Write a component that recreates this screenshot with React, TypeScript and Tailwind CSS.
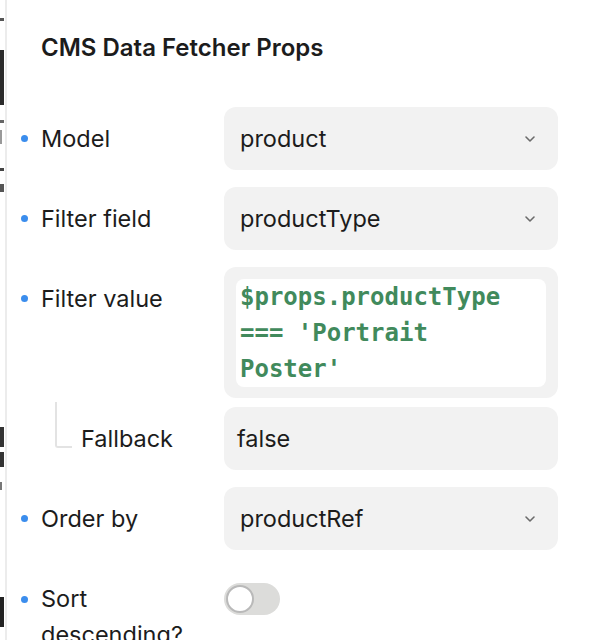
import { ReactNode } from 'react';

const labelFont = { fontFamily: 'Inter, "Noto Sans", sans-serif' };

function Bullet() {
  return <span className="block w-[7px] h-[7px] rounded-full bg-[#3b8ded] shrink-0" />;
}

function Chevron() {
  return (
    <svg width="12" height="8" viewBox="0 0 12 8" className="shrink-0">
      <path d="M2 2 L6 6 L10 2" fill="none" stroke="#6b6b6b" strokeWidth="1.6" strokeLinecap="round" strokeLinejoin="round" />
    </svg>
  );
}

function Row({ label, children, gap = 'mb-[17px]' }: { label: ReactNode; children: ReactNode; gap?: string }) {
  return (
    <div className={`flex items-start ${gap}`}>
      <div className="w-[203px] h-[63px] flex items-center shrink-0">
        <Bullet />
        <span className="ml-[13px] text-[23.5px] text-[#1c1c1c]">{label}</span>
      </div>
      <div className="w-[334px]">{children}</div>
    </div>
  );
}

function Select({ value }: { value: string }) {
  return (
    <div className="h-[63px] rounded-[12px] bg-[#f2f2f2] flex items-center justify-between pl-4 pr-[22px]">
      <span className="text-[23.5px] text-[#1c1c1c]">{value}</span>
      <Chevron />
    </div>
  );
}

function LeftStrip() {
  return (
    <div className="w-[7px] shrink-0 flex border-r-2 border-[#ececec]">
      <div className="w-[4px] flex flex-col">
        <div className="h-[18px]" />
        <div className="h-[3px] bg-[#555]" />
        <div className="h-[29px]" />
        <div className="h-[55px] bg-[#2a2a2a]" />
        <div className="h-[15px]" />
        <div className="h-[3px] bg-[#666]" />
        <div className="h-[7px]" />
        <div className="h-[14px] w-[2px] bg-[#999]" />
        <div className="h-[24px]" />
        <div className="h-[3px] bg-[#444]" />
        <div className="h-[13px]" />
        <div className="h-[8px] bg-[#555]" />
        <div className="h-[235px]" />
        <div className="h-[20px] bg-[#333]" />
        <div className="h-[5px]" />
        <div className="h-[15px] bg-[#333]" />
        <div className="h-[15px]" />
        <div className="h-[8px] w-[2px] bg-[#777]" />
        <div className="h-[107px]" />
        <div className="h-[30px] bg-[#222]" />
      </div>
    </div>
  );
}

export default function App() {
  return (
    <div className="w-[594px] h-[640px] overflow-hidden bg-white flex" style={labelFont}>
      <LeftStrip />
      <div className="flex-1 pl-[14px] pt-[34px]">
        <h1 className="pl-[20px] text-[24px] leading-[28px] font-semibold text-[#1c1c1c]">CMS Data Fetcher Props</h1>

        <div className="mt-[45px]">
          <Row label="Model">
            <Select value="product" />
          </Row>

          <Row label="Filter field">
            <Select value="productType" />
          </Row>

          <Row label="Filter value" gap="mb-[9px]">
            <div className="rounded-[12px] bg-[#f2f2f2] p-3 pb-[11px]">
              <div
                className="rounded-[8px] bg-white pl-1 pr-3 text-[24px] leading-[36px] font-bold text-[#418a5c] break-words"
                style={{ fontFamily: '"DejaVu Sans Mono", "Liberation Mono", monospace' }}
              >
                $props.productType === 'Portrait Poster'
              </div>
            </div>
          </Row>

          <div className="flex items-start mb-[17px]">
            <div className="w-[203px] h-[63px] flex items-center shrink-0">
              <div className="ml-[34px] mb-[22px] self-stretch w-[17px] border-l-2 border-b-2 border-[#e3e3e3] rounded-bl-[3px] mt-[-5px]" />
              <span className="ml-[9px] text-[23.5px] text-[#1c1c1c]">Fallback</span>
            </div>
            <div className="w-[334px] h-[63px] rounded-[12px] bg-[#f2f2f2] flex items-center pl-[13px]">
              <span className="text-[23.5px] text-[#1c1c1c]">false</span>
            </div>
          </div>

          <Row label="Order by">
            <Select value="productRef" />
          </Row>

          <div className="flex items-start">
            <div className="w-[203px] flex items-start shrink-0 pt-[14px]">
              <div className="h-[36px] flex items-center">
                <Bullet />
              </div>
              <span className="ml-[13px] w-[150px] text-[23.5px] leading-[36px] text-[#1c1c1c]">Sort descending?</span>
            </div>
            <div className="h-[63px] flex items-center">
              <div className="w-[56px] h-[32px] rounded-full bg-[#dcdcda] flex items-center pl-[2px]">
                <div className="w-[28px] h-[28px] rounded-full bg-white border-2 border-[#b9b9b9]" />
              </div>
            </div>
          </div>
        </div>
      </div>
    </div>
  );
}
